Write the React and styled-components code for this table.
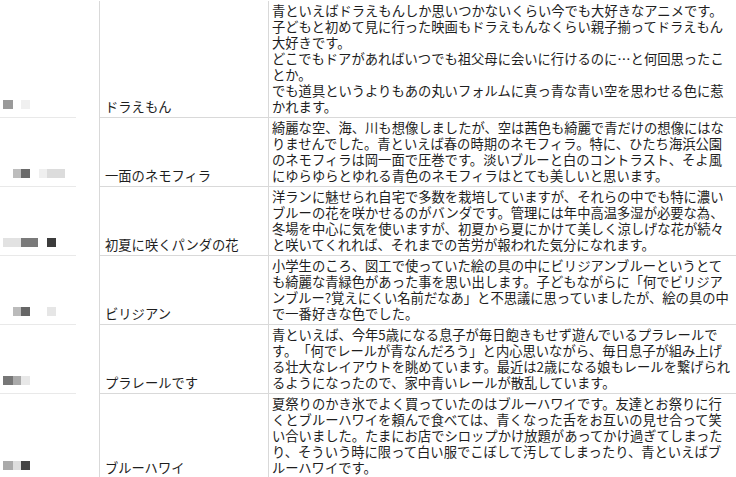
import React from 'react';
import styled, { createGlobalStyle } from 'styled-components';

const GlobalStyle = createGlobalStyle`
  html, body {
    margin: 0;
    padding: 0;
    background: #fff;
    overflow: hidden;
  }
  body {
    font-family: 'Noto Sans CJK JP', 'Noto Sans', sans-serif;
    color: #1e1e1e;
  }
`;

const Table = styled.div`
  width: 736px;
  padding-top: 1px;
  font-size: 13.3px;
  line-height: 16px;
  text-spacing-trim: space-all;
`;

const Row = styled.div`
  display: grid;
  grid-template-columns: 100px 169px 1fr;
`;

const ThumbCell = styled.div`
  display: flex;
  align-items: flex-end;
  padding: 0 0 9px 3px;
  border-right: 1px solid #d9d9d9;
  background: linear-gradient(#e9e9e9, #e9e9e9) no-repeat left bottom / 76px 1px;
`;

const Pixel = styled.span`
  display: block;
  width: ${(p) => p.$w}px;
  height: 9px;
  background: ${(p) => p.$c || 'transparent'};
`;

const TitleCell = styled.div`
  display: flex;
  align-items: flex-end;
  padding: 2px 5px;
  border-right: 1px solid #d9d9d9;
  border-bottom: 1px solid #d9d9d9;
  white-space: nowrap;
`;

const BodyCell = styled.div`
  padding: 2px 3px;
  border-bottom: 1px solid #d9d9d9;
  white-space: nowrap;
`;

const Line = styled.div`
  height: 16px;
`;

const rows = [
  {
    title: 'ドラえもん',
    mosaic: [[10, '#9a9a9a'], [8], [9, '#f0f0f0']],
    lines: [
      '青といえばドラえもんしか思いつかないくらい今でも大好きなアニメです。',
      '子どもと初めて見に行った映画もドラえもんなくらい親子揃ってドラえもん',
      '大好きです。',
      'どこでもドアがあればいつでも祖父母に会いに行けるのに…と何回思ったこ',
      'とか。',
      'でも道具というよりもあの丸いフォルムに真っ青な青い空を思わせる色に惹',
      'かれます。',
    ],
  },
  {
    title: '一面のネモフィラ',
    mosaic: [[10], [8, '#bdbdbd'], [9, '#6a6a6a'], [9], [8, '#efefef'], [18, '#dcdcdc']],
    lines: [
      '綺麗な空、海、川も想像しましたが、空は茜色も綺麗で青だけの想像にはな',
      'りませんでした。青といえば春の時期のネモフィラ。特に、ひたち海浜公園',
      'のネモフィラは岡一面で圧巻です。淡いブルーと白のコントラスト、そよ風',
      'にゆらゆらとゆれる青色のネモフィラはとても美しいと思います。',
    ],
  },
  {
    title: '初夏に咲くパンダの花',
    mosaic: [[18, '#e2e2e2'], [17, '#7a7a7a'], [9], [9, '#3c3c3c']],
    lines: [
      '洋ランに魅せられ自宅で多数を栽培していますが、それらの中でも特に濃い',
      'ブルーの花を咲かせるのがバンダです。管理には年中高温多湿が必要な為、',
      '冬場を中心に気を使いますが、初夏から夏にかけて美しく涼しげな花が続々',
      'と咲いてくれれば、それまでの苦労が報われた気分になれます。',
    ],
  },
  {
    title: 'ビリジアン',
    mosaic: [[10], [8, '#bbbbbb'], [9, '#666666'], [17], [9, '#e6e6e6']],
    lines: [
      '小学生のころ、図工で使っていた絵の具の中にビリジアンブルーというとて',
      'も綺麗な青緑色があった事を思い出します。子どもながらに「何でビリジア',
      'ンブルー?覚えにくい名前だなあ」と不思議に思っていましたが、絵の具の中',
      'で一番好きな色でした。',
    ],
  },
  {
    title: 'プラレールです',
    mosaic: [[10, '#777777'], [8, '#aaaaaa'], [9, '#e8e8e8']],
    lines: [
      '青といえば、今年5歳になる息子が毎日飽きもせず遊んでいるプラレールで',
      'す。「何でレールが青なんだろう」と内心思いながら、毎日息子が組み上げ',
      'る壮大なレイアウトを眺めています。最近は2歳になる娘もレールを繋げられ',
      'るようになったので、家中青いレールが散乱しています。',
    ],
  },
  {
    title: 'ブルーハワイ',
    mosaic: [[10, '#aaaaaa'], [8, '#dddddd'], [9, '#444444']],
    lines: [
      '夏祭りのかき氷でよく買っていたのはブルーハワイです。友達とお祭りに行',
      'くとブルーハワイを頼んで食べては、青くなった舌をお互いの見せ合って笑',
      'い合いました。たまにお店でシロップかけ放題があってかけ過ぎてしまった',
      'り、そういう時に限って白い服でこぼして汚してしまったり、青といえばブ',
      'ルーハワイです。',
    ],
  },
];

const App = () => {
  return (
    <>
      <GlobalStyle />
      <Table>
        {rows.map((row) => (
          <Row key={row.title}>
            <ThumbCell>
              {row.mosaic.map(([w, c], i) => (
                <Pixel key={i} $w={w} $c={c} />
              ))}
            </ThumbCell>
            <TitleCell>{row.title}</TitleCell>
            <BodyCell>
              {row.lines.map((line, i) => (
                <Line key={i}>{line}</Line>
              ))}
            </BodyCell>
          </Row>
        ))}
      </Table>
    </>
  );
};

export default App;
